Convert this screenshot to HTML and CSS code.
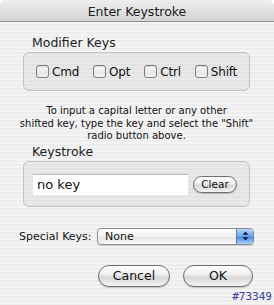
FILE: index.html
```html
<!DOCTYPE html>
<html lang="en">
  <head>
    <meta charset="UTF-8" />
    <title>Enter Keystroke</title>
    <link rel="stylesheet" href="styles.css">
  </head>
  <body>
    <div class="window">
      <div class="titlebar">Enter Keystroke</div>
      <div class="content">
        <div class="group-label">Modifier Keys</div>
        <div class="group modifiers">
          <label class="check"><span class="box"></span>Cmd</label>
          <label class="check"><span class="box"></span>Opt</label>
          <label class="check"><span class="box"></span>Ctrl</label>
          <label class="check"><span class="box"></span>Shift</label>
        </div>
        <p class="hint">
          To input a capital letter or any other<br />
          shifted key, type the key and select the "Shift"<br />
          radio button above.
        </p>
        <div class="group-label key-label">Keystroke</div>
        <div class="group keystroke">
          <div class="field">no key</div>
          <button class="pill clear">Clear</button>
        </div>
        <div class="special">
          <span class="special-label">Special Keys:</span>
          <div class="popup">
            <span class="popup-value">None</span>
            <span class="arrows">
              <svg width="7" height="10" viewBox="0 0 7 10">
                <path d="M3.5 0.5 L6.5 3.8 L0.5 3.8 Z" fill="#10203a" />
                <path d="M3.5 9.5 L6.5 6.2 L0.5 6.2 Z" fill="#10203a" />
              </svg>
            </span>
          </div>
        </div>
        <div class="actions">
          <button class="pill cancel">Cancel</button>
          <button class="pill ok">OK</button>
        </div>
        <div class="tag">#73349</div>
      </div>
    </div>
  </body>
</html>
```

FILE: styles.css
```css
html,
body {
  margin: 0;
  padding: 0;
  background: #ffffff;
  font-family: "DejaVu Sans", sans-serif;
  color: #111;
}
.window {
  width: 274px;
  height: 305px;
  overflow: hidden;
  border-radius: 6px 6px 0 0;
  background: repeating-linear-gradient(
    to bottom,
    #ededed 0,
    #ededed 2px,
    #f4f4f4 2px,
    #f4f4f4 4px
  );
}
.titlebar {
  height: 21px;
  line-height: 23px;
  text-align: center;
  font-size: 12.5px;
  color: #1a1a1a;
  background: linear-gradient(#eeeeee, #d4d4d4);
  border-bottom: 1px solid #8e8e8e;
}
.content {
  display: flex;
  flex-direction: column;
  padding: 0 24px 0 23px;
}
.group-label {
  margin: 13px 0 2px 9px;
  font-size: 12.5px;
  line-height: 15px;
  color: #222;
}
.group {
  display: flex;
  align-items: center;
  border: 1px solid #c2c2c2;
  border-radius: 6px;
  background: rgba(0, 0, 0, 0.045);
}
.modifiers {
  height: 37px;
  padding-left: 12px;
  gap: 14px;
}
.check {
  display: flex;
  align-items: center;
  gap: 3px;
  font-size: 12px;
  letter-spacing: -0.2px;
}
.box {
  width: 11px;
  height: 11px;
  border: 1px solid #7d7d7d;
  border-radius: 3px;
  background: linear-gradient(#ffffff, #e6e6e6 60%, #f6f6f6);
  box-shadow: inset 0 1px 1px rgba(0, 0, 0, 0.15);
}
.hint {
  margin: 14px -12px 0 -12px;
  font-size: 10px;
  line-height: 12.5px;
  text-align: center;
  white-space: nowrap;
}
.key-label {
  margin-top: 1px;
  margin-bottom: 2px;
}
.keystroke {
  height: 42px;
  padding-left: 9px;
  padding-top: 2px;
  box-sizing: content-box;
}
.field {
  width: 151px;
  height: 21px;
  padding-left: 4px;
  line-height: 21px;
  font-size: 13px;
  background: #ffffff;
  box-shadow: inset 0 1px 0 #bdbdbd;
}
.pill {
  font-family: "DejaVu Sans", sans-serif;
  color: #111;
  border: 1px solid #6f6f6f;
  background: linear-gradient(#ffffff 0%, #eeeeee 45%, #d6d6d6 55%, #f4f4f4 100%);
  box-shadow: 0 1px 1px rgba(0, 0, 0, 0.2);
  padding: 0;
  cursor: pointer;
}
.clear {
  margin-left: 5px;
  width: 44px;
  height: 17px;
  border-radius: 9px;
  font-size: 10.5px;
  line-height: 15px;
}
.special {
  display: flex;
  align-items: center;
  margin: 21px -4px 0 -4px;
}
.special-label {
  flex: 1;
  font-size: 11px;
}
.popup {
  display: flex;
  width: 157px;
  height: 17px;
  border: 1px solid #8a8a8a;
  border-radius: 4px;
  box-sizing: border-box;
  overflow: hidden;
  background: linear-gradient(#ffffff, #f0f0f0 50%, #e2e2e2 51%, #fafafa);
  box-shadow: 0 1px 1px rgba(0, 0, 0, 0.15);
}
.popup-value {
  flex: 1;
  padding-left: 7px;
  font-size: 11px;
  line-height: 15px;
}
.arrows {
  width: 16px;
  display: flex;
  align-items: center;
  justify-content: center;
  border-left: 1px solid #5a7fb8;
  background: linear-gradient(#b9d6f7, #6ea6ee 48%, #4a8ae6 52%, #a6d0fb);
}
.actions {
  display: flex;
  justify-content: flex-end;
  gap: 13px;
  margin: 20px -3px 0 0;
}
.cancel,
.ok {
  height: 22px;
  border-radius: 11px;
  font-size: 12.5px;
  line-height: 20px;
}
.cancel {
  width: 72px;
}
.ok {
  width: 70px;
}
.tag {
  align-self: flex-end;
  margin: 4px -22px 0 0;
  font-family: "DejaVu Sans Mono", monospace;
  font-size: 11px;
  line-height: 12px;
  color: #3b3bb0;
}
```
